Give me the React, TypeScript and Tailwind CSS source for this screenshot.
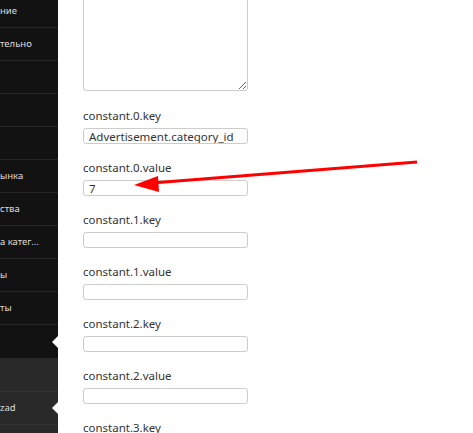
import React from 'react'

const darkRows = ['ние', 'тельно', '', '', '', 'ынка', 'ства', 'а катег...', 'ы', 'ты', '']

function Caret() {
  return (
    <span className="absolute right-0 top-1/2 -translate-y-1/2 w-0 h-0 border-y-[6px] border-y-transparent border-r-[6px] border-r-white" />
  )
}

function Field({ name, value = '' }: { name: string; value?: string }) {
  return (
    <div className="flex flex-col shrink-0">
      <label className="h-[16px] leading-[16px] text-[11.5px] text-[#333]">{name}</label>
      <input
        readOnly
        value={value}
        className="mt-[4px] w-[165px] h-[16px] px-[5px] text-[11.5px] leading-[14px] text-[#333] border border-[#ccc] rounded-[3px] outline-none bg-white"
      />
    </div>
  )
}

export default function App() {
  const fields = [
    ['constant.0.key', 'Advertisement.category_id'],
    ['constant.0.value', '7'],
    ['constant.1.key', ''],
    ['constant.1.value', ''],
    ['constant.2.key', ''],
    ['constant.2.value', ''],
    ['constant.3.key', ''],
  ]

  return (
    <div className="relative w-[473px] h-[433px] overflow-hidden bg-white flex font-['Noto_Sans',sans-serif]">
      <div className="w-[58px] shrink-0 bg-[#121212] flex flex-col text-[9.5px] text-[#ddd]">
        <div className="-mt-[5px] shrink-0">
          {darkRows.map((t, i) => (
            <div
              key={i}
              className={`relative h-[33px] flex items-center whitespace-nowrap overflow-hidden ${i < darkRows.length - 1 ? 'border-b border-[#262626]' : ''}`}
            >
              {t}
              {i === darkRows.length - 1 && <Caret />}
            </div>
          ))}
        </div>
        <div className="flex-1 bg-[#292929] flex flex-col">
          <div className="h-[34px] shrink-0 border-b border-[#333]" />
          <div className="relative h-[33px] shrink-0 flex items-center border-b border-[#333]">
            zad
            <Caret />
          </div>
        </div>
      </div>

      <div className="flex-1 pl-[25px] flex flex-col">
        <textarea
          readOnly
          className="shrink-0 -mt-[8px] w-[165px] h-[99px] border border-[#ccc] rounded-[3px] outline-none resize"
        />
        <div className="shrink-0 mt-[17px] flex flex-col gap-[16px]">
          {fields.map(([n, v]) => (
            <Field key={n} name={n} value={v} />
          ))}
        </div>
      </div>

      <svg className="absolute left-0 top-0 pointer-events-none" width="473" height="433">
        <line x1="417" y1="162" x2="152" y2="183" stroke="#f00" strokeWidth="3" />
        <polygon points="134,185 158,176 159,192" fill="#f00" />
      </svg>
    </div>
  )
}
